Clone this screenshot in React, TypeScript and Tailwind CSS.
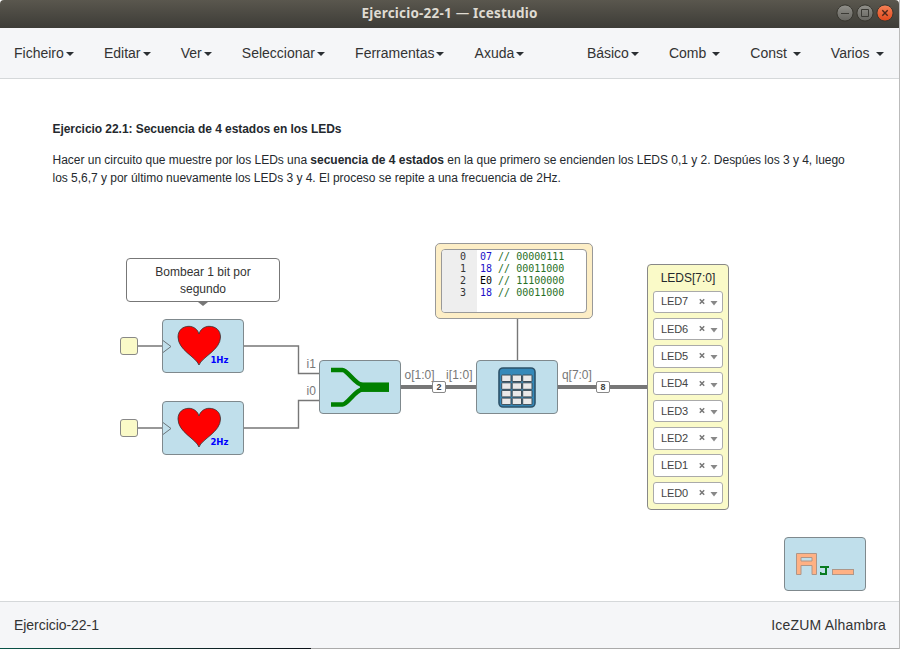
import React from 'react';

const sans = "font-['Liberation_Sans',sans-serif]";

function Caret() {
  return <span className="inline-block border-x-4 border-t-4 border-x-transparent border-t-[#2b2f33] align-middle" />;
}

function MenuItem({ label, wide = false }: { label: string; wide?: boolean }) {
  return (
    <a className="flex items-center whitespace-pre">
      <span className={wide ? 'mr-1.5' : 'mr-0.5'}>{label}</span>
      <span className="flex pt-px"><Caret /></span>
    </a>
  );
}

function WindowButton({ kind }: { kind: 'min' | 'max' | 'close' }) {
  const close = kind === 'close';
  return (
    <svg width="18" height="18" viewBox="0 0 18 18" fill="none">
      <circle cx="9" cy="9" r="8.1" fill={close ? 'url(#orange)' : 'url(#grey)'} stroke="#37362f" />
      {kind === 'min' && <path d="M5 9.5h8" stroke="#3b3a35" />}
      {kind === 'max' && <path d="M5.5 5.5h7v7h-7z" stroke="#3b3a35" />}
      {close && <path d="M6.3 6.3l5.4 5.4m0-5.4l-5.4 5.4" stroke="#4b261a" strokeWidth="1.4" />}
      <defs>
        <linearGradient id="grey" x2="0" y2="1"><stop stopColor="#92918b" /><stop offset="1" stopColor="#64635e" /></linearGradient>
        <linearGradient id="orange" x2="0" y2="1"><stop stopColor="#f58358" /><stop offset="1" stopColor="#e1471b" /></linearGradient>
      </defs>
    </svg>
  );
}

function HeartBlock({ rate, top }: { rate: string; top: string }) {
  return (
    <div className={`absolute left-[162px] ${top} h-[54px] w-[82px] rounded-[4px] border border-[#7f898d] bg-[#c0dfeb]`}>
      <svg className="block" width="80" height="52" viewBox="0 0 80 52" fill="none">
        <path d="M0 20.5L8 26.5L0 32.5" stroke="#6b7478" />
        <path
          d="M36 45C33 37 15 30 15 17C15 10 20 6.3 26 6.3C31 6.3 35 10 36 14C37 10 41 6.3 46 6.3C53 6.3 57.5 10.5 57.5 17C57.5 30 39 37 36 45Z"
          fill="#f00"
          stroke="#333"
          strokeWidth=".8"
        />
      </svg>
      <span className="absolute left-[47.5px] top-[34px] font-['DejaVu_Sans_Condensed','DejaVu_Sans',sans-serif] text-[9.5px] font-bold leading-[12px] tracking-[-0.1px] text-[#00f] [font-stretch:condensed]">{rate}</span>
    </div>
  );
}

function LedSelect({ name }: { name: string }) {
  return (
    <div className="flex h-[22.4px] items-center rounded-[3px] border border-[#aaa] bg-white pl-[7px] text-[11px] text-[#444]">
      <span className="w-[37px] tracking-[-0.1px]">{name}</span>
      <svg width="20" height="10" viewBox="0 0 20 10" fill="none">
        <path d="M1.8 2.3l4.4 4.4m0-4.4L1.8 6.7" stroke="#777" strokeWidth="1.5" />
        <path d="M12.5 4h7l-3.5 4.5z" fill="#888" />
      </svg>
    </div>
  );
}

const rows = [
  ['0', '07', '00000111'],
  ['1', '18', '00011000'],
  ['2', 'E0', '11100000'],
  ['3', '18', '00011000'],
];

function Wires() {
  return (
    <svg className="absolute left-0 top-0" width="899" height="522" viewBox="0 79 899 522" fill="none">
      <path d="M138 346H162M244 346H298.5V373.5H319M138 428H162M244 428H298.5V400.5H319M517.5 318V360" stroke="#777" strokeWidth="1.4" />
      <path d="M401 387H476M558 387H648" stroke="#777" strokeWidth="3.8" />
    </svg>
  );
}

function BusSize({ n, pos }: { n: string; pos: string }) {
  return (
    <span className={`absolute top-[302px] ${pos} flex h-[12px] w-[14px] items-center justify-center rounded-[2px] border border-[#888] bg-white text-[9px] font-bold leading-none text-[#444]`}>{n}</span>
  );
}

function Port({ children, pos }: { children: string; pos: string }) {
  return <span className={`absolute ${pos} whitespace-nowrap text-[12px] leading-[14px] text-[#777]`}>{children}</span>;
}

function Canvas() {
  return (
    <main className="relative h-[522px] overflow-hidden bg-white text-[12px] text-[#24292e]">
      <article className="pl-[52.5px] pt-[41px] leading-[18px]">
        <h1 className="whitespace-nowrap font-bold tracking-[-0.05px]">Ejercicio 22.1: Secuencia de 4 estados en los LEDs</h1>
        <p className="mt-[13px] whitespace-nowrap tracking-[-0.02px]">
          Hacer un circuito que muestre por los LEDs una <b>secuencia de 4 estados</b> en la que primero se encienden los LEDS 0,1 y 2. Despúes los 3 y 4, luego
          <br />
          los 5,6,7 y por último nuevamente los LEDs 3 y 4. El proceso se repite a una frecuencia de 2Hz.
        </p>
      </article>
      <Wires />

      <div className="absolute left-[126px] top-[179px] flex h-[44px] w-[154px] items-center justify-center rounded-[4px] border border-[#777] bg-white pt-px text-center leading-[17px] text-[#333]">
        <span>Bombear 1 bit por<br />segundo</span>
        <span className="absolute left-[71px] top-[43px] border-x-[5px] border-t-[4px] border-x-transparent border-t-[#777]" />
      </div>

      <div className="absolute left-[120px] top-[258px] h-[18px] w-[18px] rounded-[3px] border border-[#888] bg-[#fafac8]" />
      <div className="absolute left-[120px] top-[340px] h-[18px] w-[18px] rounded-[3px] border border-[#888] bg-[#fafac8]" />
      <HeartBlock rate="1Hz" top="top-[240px]" />
      <HeartBlock rate="2Hz" top="top-[322px]" />

      <Port pos="left-[306.5px] top-[278px]">i1</Port>
      <Port pos="left-[306.5px] top-[305px]">i0</Port>
      <div className="absolute left-[319px] top-[281px] h-[54px] w-[82px] rounded-[4px] border border-[#7f898d] bg-[#c0dfeb]">
        <svg width="80" height="52" viewBox="0 0 80 52" fill="none" stroke="#008000">
          <path d="M11 9h11.5c5 0 13 15 20 15M11 43.5h11.5c5 0 13-15 20-15" strokeWidth="4.6" />
          <path d="M40 26.2h29" strokeWidth="9.5" />
        </svg>
      </div>
      <Port pos="left-[404.5px] top-[289px]">o[1:0]</Port>
      <Port pos="left-[446px] top-[289px] tracking-[0.1px]">i[1:0]</Port>
      <BusSize n="2" pos="left-[432px]" />

      <div className="absolute left-[435px] top-[164px] h-[76px] w-[158px] rounded-[5px] border border-[#999] bg-[#fdeec6] p-[5px]">
        <div className="flex h-full overflow-hidden rounded-[4px] border border-[#999] bg-white font-['DejaVu_Sans_Mono','Liberation_Mono',monospace] text-[10px] leading-[12px]">
          <div className="w-[35px] bg-[#eee] pr-[11px] pt-px text-right text-[#333]">
            {rows.map(([n]) => <div key={n}>{n}</div>)}
          </div>
          <div className="whitespace-pre pl-[3px] pt-px">
            {rows.map(([n, value, bits]) => (
              <div key={n}>
                <span className={n === '2' ? 'text-black' : 'text-[#2010c8]'}>{value}</span>
                <span className="text-[#287026]"> {'//'} {bits}</span>
              </div>
            ))}
          </div>
        </div>
      </div>

      <div className="absolute left-[476px] top-[281px] h-[54px] w-[82px] rounded-[4px] border border-[#7f898d] bg-[#c0dfeb]">
        <svg width="80" height="52" viewBox="0 0 80 52">
          <rect x="22" y="7" width="36" height="39" rx="4" fill="#3589b9" stroke="#2d536a" strokeWidth="1.6" />
          <g fill="#e9e9e9" stroke="#3c4c56">
            {[14, 21.8, 29.4, 37.1].map((y) => [24.7, 35.2, 45.7].map((x) => <rect key={`${x}-${y}`} x={x} y={y} width="9.3" height="6.5" rx=".5" />))}
          </g>
        </svg>
      </div>
      <Port pos="left-[562px] top-[289px] tracking-[-0.05px]">q[7:0]</Port>
      <BusSize n="8" pos="left-[596px]" />

      <div className="absolute left-[647px] top-[185px] flex h-[246px] w-[82px] flex-col gap-[4.95px] rounded-[4px] border border-[#888] bg-[#fafac8] px-[5px]">
        <div className="mb-[-4.95px] h-[25.5px] pt-[5px] text-center leading-[16px]">LEDS[7:0]</div>
        {['LED7', 'LED6', 'LED5', 'LED4', 'LED3', 'LED2', 'LED1', 'LED0'].map((n) => <LedSelect key={n} name={n} />)}
      </div>

      <div className="absolute left-[784px] top-[458px] h-[54px] w-[82px] rounded-[4px] border border-[#7f898d] bg-[#c0dfeb]">
        <svg width="80" height="52" viewBox="0 0 80 52">
          <path fillRule="evenodd" d="M11.5 15.5h20v21h-4.5v-9H16v9h-4.5zM16 19.5v3.5h11v-3.5z" fill="#ffb184" stroke="#ae9688" />
          <path d="M35 28h9v2h-2v7h-7v-3h1.5v1H40v-5h-5z" fill="#087b20" />
          <rect x="47.5" y="31.5" width="21" height="5" fill="#ffb184" stroke="#ae9688" />
        </svg>
      </div>
    </main>
  );
}

export default function App() {
  return (
    <div className={`flex h-[649px] w-[900px] overflow-hidden bg-white ${sans}`}>
      <div className="flex w-[899px] flex-col">
        <header className="grid h-[28px] shrink-0 grid-cols-[1fr_auto_1fr] items-center rounded-t-[4px] bg-linear-to-b from-[#5a574e] to-[#3d3c37]">
          <span />
          <h1 className="pb-[2px] font-['Noto_Sans',sans-serif] text-[13.5px] font-bold leading-[18px] tracking-[0.2px] text-[#dfdbd2]">Ejercicio-22-1 <span className="font-normal">—</span> Icestudio</h1>
          <div className="flex justify-end gap-[2px] pb-[2px] pr-[5px]">
            <WindowButton kind="min" /><WindowButton kind="max" /><WindowButton kind="close" />
          </div>
        </header>
        <nav className="flex h-[51px] shrink-0 items-center justify-between border-b border-[#d5d8da] bg-[#f5f6f8] pl-[14px] pr-[15.5px] text-[14px] leading-[20px] text-[#333]">
          <div className="flex gap-[30.15px]">
            {['Ficheiro', 'Editar', 'Ver', 'Seleccionar', 'Ferramentas', 'Axuda'].map((l) => <MenuItem key={l} label={l} />)}
          </div>
          <div className="flex gap-[30px]">
            <MenuItem label="Básico" />
            {['Comb', 'Const', 'Varios'].map((l) => <MenuItem key={l} label={l} wide />)}
          </div>
        </nav>
        <Canvas />
        <footer className="flex h-[47px] shrink-0 items-center justify-between border-t border-[#d5d8da] bg-[#f5f6f8] pl-[14px] pr-[13px] text-[14px] text-[#333]">
          <span className="tracking-[-0.05px]">Ejercicio-22-1</span>
          <span className="tracking-[0.18px]">IceZUM Alhambra</span>
        </footer>
        <div className="flex h-px bg-[#aaa]"><span className="w-[311px] bg-linear-to-r from-[#075448] to-[#0b1118]" /></div>
      </div>
      <div className="w-px bg-[#bbb]" />
    </div>
  );
}
